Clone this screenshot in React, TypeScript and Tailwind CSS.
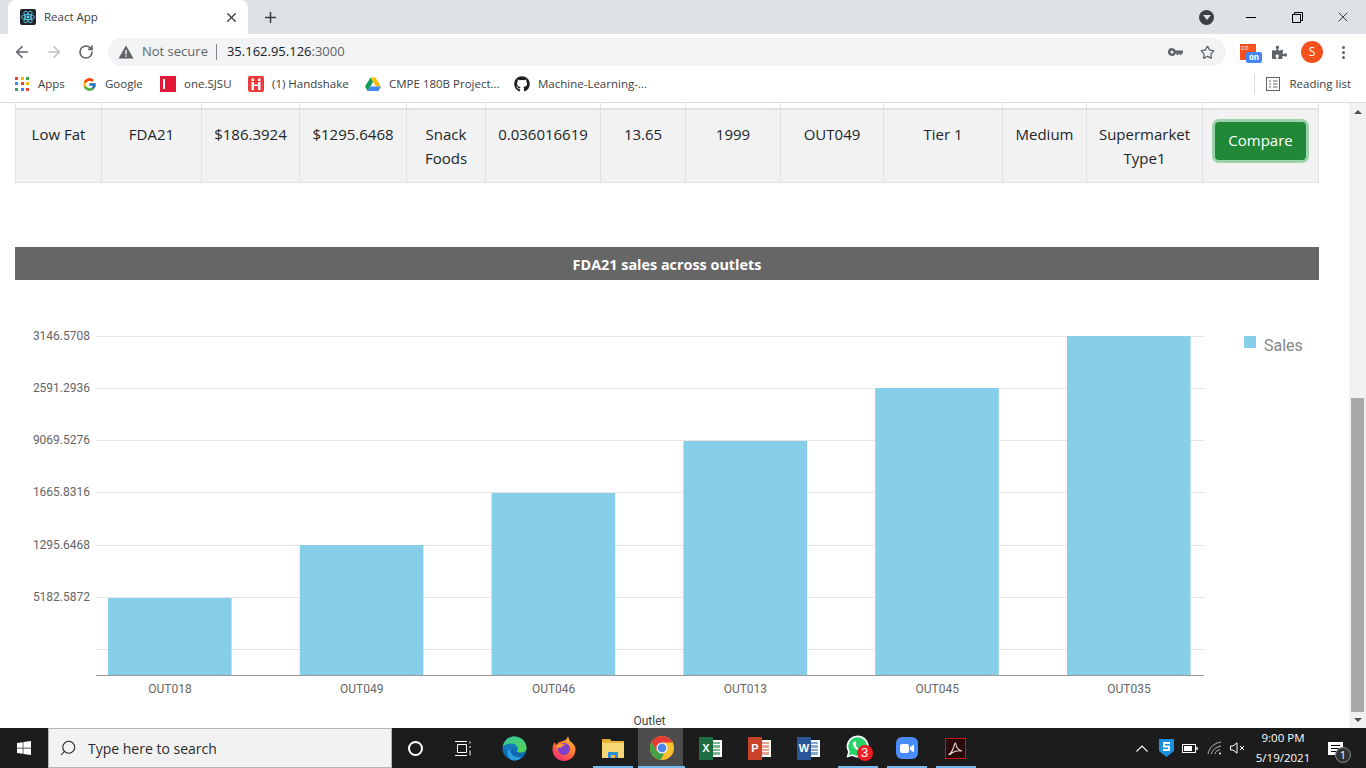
import { ArrowLeft, ArrowRight, RotateCw, Star, X, Plus, Search } from "lucide-react"
import { FaGithub, FaPuzzlePiece, FaWindows } from "react-icons/fa"
import { FcGoogle } from "react-icons/fc"

const columns = [
    { width: "w-[86px]", text: "Low Fat" },
    { width: "w-[100px]", text: "FDA21" },
    { width: "w-[98px]", text: "$186.3924" },
    { width: "w-[107px]", text: "$1295.6468" },
    { width: "w-[79px]", text: "Snack Foods" },
    { width: "w-[115px]", text: "0.036016619" },
    { width: "w-[85px]", text: "13.65" },
    { width: "w-[95px]", text: "1999" },
    { width: "w-[103px]", text: "OUT049" },
    { width: "w-[119px]", text: "Tier 1" },
    { width: "w-[84px]", text: "Medium" },
    { width: "w-[116px]", text: "Supermarket Type1" },
]

const gridLines = [336, 388, 440, 492, 545, 597, 649]
const yLabels = [
    { y: 336, text: "3146.5708" },
    { y: 388, text: "2591.2936" },
    { y: 440, text: "9069.5276" },
    { y: 492, text: "1665.8316" },
    { y: 545, text: "1295.6468" },
    { y: 597, text: "5182.5872" },
]
const bars = [
    { x: 108, top: 598, label: "OUT018" },
    { x: 299.8, top: 545, label: "OUT049" },
    { x: 491.6, top: 493, label: "OUT046" },
    { x: 683.4, top: 441, label: "OUT013" },
    { x: 875.2, top: 388, label: "OUT045" },
    { x: 1067, top: 336, label: "OUT035" },
]

function ReactFavicon() {
    return (
        <svg width="16" height="16" viewBox="0 0 16 16">
            <rect width="16" height="16" rx="2" fill="#20232a" />
            <g fill="none" stroke="#61dafb" strokeWidth="0.8">
                <ellipse cx="8" cy="8" rx="6.5" ry="2.6" />
                <ellipse cx="8" cy="8" rx="6.5" ry="2.6" transform="rotate(60 8 8)" />
                <ellipse cx="8" cy="8" rx="6.5" ry="2.6" transform="rotate(120 8 8)" />
            </g>
            <circle cx="8" cy="8" r="1.4" fill="#61dafb" />
        </svg>
    )
}

function AppsGrid() {
    const colors = ["#ea4335", "#fbbc04", "#34a853", "#4285f4", "#ea4335", "#fbbc04", "#34a853", "#4285f4", "#ea4335"]
    return (
        <div className="grid grid-cols-3 gap-[2px] w-[15px] h-[14px]">
            {colors.map((c, i) => (
                <span key={i} className="w-[3px] h-[3px]" style={{ backgroundColor: c }} />
            ))}
        </div>
    )
}

function DriveIcon() {
    return (
        <svg width="16" height="15" viewBox="0 0 16 15">
            <path d="M5.5 0.5h5L16 9.5h-5z" fill="#fbbc04" />
            <path d="M5.5 0.5L0 9.5l2.6 4.6L8 5z" fill="#0f9d58" />
            <path d="M2.6 14.1h10.8L16 9.5H5.2z" fill="#4285f4" />
        </svg>
    )
}

function HandshakeIcon() {
    return (
        <svg width="16" height="16" viewBox="0 0 16 16">
            <rect width="16" height="16" rx="2" fill="#ee3a3a" />
            <g fill="#fff">
                <rect x="3.500" y="2.500" width="2.500" height="2.500" />
                <rect x="10" y="2.500" width="2.500" height="2.500" />
                <rect x="3.500" y="6" width="2.500" height="8" />
                <rect x="10" y="6" width="2.500" height="8" />
                <rect x="6" y="8.500" width="4" height="1.500" />
            </g>
        </svg>
    )
}

function Bookmark({ icon, label, className }: { icon: React.ReactNode; label: string; className: string }) {
    return (
        <div className={`flex items-center ${className}`}>
            {icon}
            <span className="ml-2 whitespace-nowrap">{label}</span>
        </div>
    )
}

function ChromeLogo({ size = 24 }: { size?: number }) {
    return (
        <svg width={size} height={size} viewBox="0 0 24 24">
            <circle cx="12" cy="12" r="12" fill="#fbc02d" />
            <path d="M12 0a12 12 0 0 0-10.4 6l5.2 9L12 6.5h10.4A12 12 0 0 0 12 0z" fill="#e53935" />
            <path d="M1.6 6A12 12 0 0 0 10.5 23.9L15.7 15H6.8z" fill="#43a047" />
            <circle cx="12" cy="12" r="5.5" fill="#fff" />
            <circle cx="12" cy="12" r="4.4" fill="#4a86e8" />
        </svg>
    )
}

function EdgeLogo() {
    return (
        <svg width="25" height="25" viewBox="0 0 25 25">
            <defs>
                <linearGradient id="edgeA" x1="0" y1="0" x2="1" y2="1">
                    <stop offset="0" stopColor="#33c6a0" />
                    <stop offset="1" stopColor="#58d54e" />
                </linearGradient>
                <linearGradient id="edgeB" x1="0" y1="0" x2="0" y2="1">
                    <stop offset="0" stopColor="#1a8fd0" />
                    <stop offset="1" stopColor="#0c5aa6" />
                </linearGradient>
            </defs>
            <circle cx="12.5" cy="12.5" r="12" fill="url(#edgeB)" />
            <path d="M0.8 11C2 4 7 0.5 12.5 0.5 19 0.5 24.5 5.5 24.5 12c0 3-2.5 4.5-5.5 4.5-2.5 0-4.5-.6-4-1.6 1-1 1-2.5.2-4C14 8.500 11.500 7.500 9 7.500 5 7.500 2 9 .8 11z" fill="url(#edgeA)" />
            <path d="M8 13c0 5 4 8 8 8 1.500 0 3-.4 4-1-2 3-5 4.500-8 4.500-4 0-6.500-4-6.500-7.500 0-1.500 1-3.500 2.500-4z" fill="#2ba0e0" />
        </svg>
    )
}

function FirefoxLogo() {
    return (
        <svg width="24" height="25" viewBox="0 0 24 25">
            <defs>
                <linearGradient id="ffA" x1="0.8" y1="0" x2="0.2" y2="1">
                    <stop offset="0" stopColor="#ffbd2e" />
                    <stop offset="0.55" stopColor="#ff6a3a" />
                    <stop offset="1" stopColor="#f0267a" />
                </linearGradient>
            </defs>
            <path d="M16 0c1 2 .500 3.500 2 5 3 2.500 5.500 4.500 5.500 8.500C23.500 20 18.500 25 12 25S.5 20 .5 13.500C.5 10 1.500 7.500 3 6c0 1.500.5 2.500 1.500 3C6 6 9 5.500 11 5c2-.6 4.500-2 5-5z" fill="url(#ffA)" />
            <circle cx="12" cy="13" r="6" fill="#7b3fc8" />
            <path d="M3 10c3-2 7-3 11-1-3 0-4 1-4 2.500-3 0-4.500 1-7-1.500z" fill="#ff9b2e" />
        </svg>
    )
}

function FolderIcon() {
    return (
        <svg width="22" height="20" viewBox="0 0 22 20">
            <path d="M0 1h8l2 2.500H0z" fill="#e0a82e" />
            <rect y="3" width="22" height="17" fill="#f7d774" />
            <rect y="3" width="22" height="2" fill="#e8b93c" />
            <path d="M6 20v-6h10v6h-3v-3H9v3z" fill="#2e8fd6" />
            <rect x="9" y="17" width="4" height="3" fill="#f5b93a" />
        </svg>
    )
}

function OfficeIcon({ letter, dark, light }: { letter: string; dark: string; light: string }) {
    return (
        <div className="relative w-[23px] h-[23px]">
            <div className="absolute right-0 top-[3px] w-[14px] h-[17px] grid grid-rows-4 gap-[1px] p-[2px] bg-white">
                <span style={{ backgroundColor: light }} />
                <span style={{ backgroundColor: light }} />
                <span style={{ backgroundColor: light }} />
                <span style={{ backgroundColor: light }} />
            </div>
            <div
                className="absolute left-0 top-0 w-[14px] h-[23px] flex items-center justify-center text-white font-bold text-[11px] [font-family:'Liberation_Sans',sans-serif]"
                style={{ backgroundColor: dark }}
            >
                {letter}
            </div>
        </div>
    )
}

function WhatsappIcon() {
    return (
        <div className="relative w-[26px] h-[26px] ml-[2px]">
            <svg width="23" height="23" viewBox="0 0 23 23">
                <path d="M11.500 0.500a11 11 0 0 0-9.400 16.500L.5 22.500l5.700-1.500A11 11 0 1 0 11.500.5z" fill="#fff" />
                <path d="M11.500 2.300a9.200 9.200 0 0 0-7.700 14.100l-1 3.800 3.900-1A9.200 9.200 0 1 0 11.500 2.300z" fill="#25d366" />
                <path d="M8 6.500c-1 .6-1.500 2-1 3.500 1 2.600 3.500 5.200 6 6 1.500.5 3 0 3.500-1.200l.2-1.300-2.500-1.200-1.100 1.200c-1.500-.6-2.800-2-3.500-3.300l.9-1.200-1-2.500z" fill="#fff" />
            </svg>
            <span className="absolute right-[-1px] bottom-0 w-[16px] h-[16px] rounded-full bg-[#ee1c25] text-white text-[13px] leading-[16px] text-center [font-family:'Liberation_Sans',sans-serif]">
                3
            </span>
        </div>
    )
}

function ZoomIcon() {
    return (
        <div className="w-[22px] h-[22px] rounded-[6px] bg-[#4a8cff] flex items-center justify-center">
            <svg width="14" height="9" viewBox="0 0 14 9">
                <rect width="9" height="9" rx="2" fill="#fff" />
                <path d="M10 3.200L14 .5v8L10 5.800z" fill="#fff" />
            </svg>
        </div>
    )
}

function AcrobatIcon() {
    return (
        <div className="w-[21px] h-[21px] border-[1.5px] border-[#c8141a] bg-[#2a0b0b] flex items-center justify-center">
            <svg width="15" height="15" viewBox="0 0 15 15" fill="none" stroke="#e8d8d8" strokeWidth="1.1">
                <path d="M1 13.500c2-1 4-5 5.500-10 .3-2 1.500-2 1.500 0 0 3 3 6 6 6.500-3-.5-7 0-9.500 1.500C3 12.500 2 14 1 13.500z" />
            </svg>
        </div>
    )
}

function TaskbarCell({ children, underline, active }: { children: React.ReactNode; underline?: boolean; active?: boolean }) {
    return (
        <div className="relative w-[49px] h-full flex items-center justify-center">
            {active && <span className="absolute left-[1px] right-[3px] inset-y-0 bg-[#4c4c4c]" />}
            <div className="relative flex items-center justify-center">{children}</div>
            {underline && <span className={`absolute bottom-0 h-[2px] bg-[#76b9ed] ${active ? "left-[1px] right-[1px]" : "left-[5px] right-[4px]"}`} />}
        </div>
    )
}

export default function App() {
    return (
        <div className="w-[1366px] h-screen overflow-hidden flex flex-col bg-white [font-family:'Open_Sans',sans-serif]">
            {/* Tab strip */}
            <div className="h-[34px] shrink-0 bg-[#dee1e6] flex items-end">
                <div className="ml-[8px] w-[240px] h-[34px] bg-white rounded-t-[8px] flex items-center pl-[12px] pr-[9px]">
                    <ReactFavicon />
                    <span className="ml-[8px] text-[11.5px] text-[#3c4043]">React App</span>
                    <X className="ml-auto text-[#3c4043]" size={15} strokeWidth={2.2} />
                </div>
                <div className="w-[44px] h-[34px] flex items-center justify-center">
                    <Plus className="text-[#3c4043]" size={17} strokeWidth={2.2} />
                </div>
                <div className="ml-auto h-[34px] flex items-center">
                    <div className="w-[15px] h-[15px] rounded-full bg-[#3c4043] flex items-center justify-center mr-[14px]">
                        <span className="w-0 h-0 border-l-[4px] border-r-[4px] border-t-[5px] border-l-transparent border-r-transparent border-t-[#dee1e6]" />
                    </div>
                    <div className="w-[46px] flex justify-center">
                        <span className="w-[10px] h-[1px] bg-black" />
                    </div>
                    <div className="w-[46px] flex justify-center">
                        <svg width="11" height="11" viewBox="0 0 11 11" fill="none" stroke="#000">
                            <rect x="0.5" y="2.5" width="8" height="8" />
                            <path d="M2.500 2.500V.5h8v8H8.500" />
                        </svg>
                    </div>
                    <div className="w-[46px] flex justify-center">
                        <X className="text-black" size={16} strokeWidth={1.1} />
                    </div>
                </div>
            </div>

            {/* Toolbar */}
            <div className="h-[34px] shrink-0 bg-white flex items-center pt-[2px]">
                <div className="w-[108px] flex items-center pl-[13px]">
                    <ArrowLeft className="text-[#5f6368]" size={18} strokeWidth={2.2} />
                    <ArrowRight className="ml-[14px] text-[#bdc1c6]" size={18} strokeWidth={2.2} />
                    <RotateCw className="ml-[15px] text-[#5f6368]" size={16} strokeWidth={2.4} />
                </div>
                <div className="w-[1118px] h-[28px] rounded-full bg-[#f1f3f4] flex items-center pl-[10px] pr-[11px] text-[13px]">
                    <svg width="16" height="14" viewBox="0 0 16 14">
                        <path d="M8 0.500L15.500 13.500H.5z" fill="#5f6368" />
                        <rect x="7.300" y="5" width="1.400" height="4.500" fill="#f1f3f4" />
                        <rect x="7.300" y="10.300" width="1.400" height="1.500" fill="#f1f3f4" />
                    </svg>
                    <span className="ml-[8px] text-[#5f6368]">Not secure</span>
                    <span className="ml-[8px] w-[1px] h-[16px] bg-[#80868b]" />
                    <span className="ml-[10px] text-[#202124]">
                        35.162.95.126<span className="text-[#5f6368]">:3000</span>
                    </span>
                    <svg className="ml-auto" width="15" height="8" viewBox="0 0 15 8" fill="#5f6368">
                        <path d="M4 0a4 4 0 0 1 3.700 2.500H15v3h-1.500V7h-2V5.500h-1V7h-2V5.500h-.800A4 4 0 1 1 4 0zm0 2.500a1.500 1.500 0 1 0 0 3 1.500 1.500 0 0 0 0-3z" fillRule="evenodd" />
                    </svg>
                    <Star className="ml-[17px] text-[#5f6368]" size={15} strokeWidth={2} />
                </div>
                <div className="relative ml-[14px] w-[16px] h-[16px] bg-[#f4511e] text-[7px] text-white leading-[8px] pl-[1px]">
                    co
                    <span className="absolute left-[6px] top-[8px] w-[16px] h-[11px] rounded-[2px] bg-[#4285f4] text-white font-bold text-[8px] leading-[10px] text-center">
                        on
                    </span>
                </div>
                <FaPuzzlePiece className="ml-[16px] text-[#5f6368]" size={15} />
                <div className="ml-[14px] w-[22px] h-[22px] rounded-full bg-[#f4511e] text-white text-[12px] flex items-center justify-center">S</div>
                <div className="ml-[19px] flex flex-col gap-[2px]">
                    <span className="w-[3px] h-[3px] rounded-full bg-[#5f6368]" />
                    <span className="w-[3px] h-[3px] rounded-full bg-[#5f6368]" />
                    <span className="w-[3px] h-[3px] rounded-full bg-[#5f6368]" />
                </div>
            </div>

            {/* Bookmarks bar */}
            <div className="h-[35px] shrink-0 bg-white border-b border-[#dadce0] flex items-center text-[11.5px] text-[#3c4043] pl-[15px] pb-[2px]">
                <Bookmark className="w-[67px]" icon={<AppsGrid />} label="Apps" />
                <Bookmark className="w-[78px]" icon={<FcGoogle size={15} />} label="Google" />
                <Bookmark
                    className="w-[88px]"
                    icon={
                        <div className="w-[16px] h-[16px] bg-[#e31837] flex items-center pl-[3px]">
                            <span className="w-[2px] h-[10px] bg-white" />
                        </div>
                    }
                    label="one.SJSU"
                />
                <Bookmark className="w-[117px]" icon={<HandshakeIcon />} label="(1) Handshake" />
                <Bookmark className="w-[149px]" icon={<DriveIcon />} label="CMPE 180B Project..." />
                <Bookmark icon={<FaGithub className="text-[#1b1f23]" size={16} />} className="" label="Machine-Learning-..." />
                <span className="ml-auto w-[1px] h-[20px] bg-[#dadce0]" />
                <svg className="ml-[11px]" width="14" height="14" viewBox="0 0 14 14" fill="none" stroke="#5f6368">
                    <rect x="0.5" y="0.5" width="13" height="13" />
                    <path d="M3 4h2M7 4h4.500M3 7h2M7 7h4.500M3 10h2M7 10h4.500" />
                </svg>
                <span className="ml-[9px] mr-[15px]">Reading list</span>
            </div>

            {/* Page */}
            <div className="flex-1 min-h-0 flex">
                <div className="w-[1349px] min-h-0">
                    <div className="pl-[15px]">
                        <table className="w-[1303px] table-fixed border-collapse text-[15px] leading-[24px] text-[#212529]">
                            <tbody>
                                <tr className="h-[6px]">
                                    {columns.map((c, i) => (
                                        <td key={i} className={`${c.width} border-x border-[#dee2e6] p-0`} />
                                    ))}
                                    <td className="w-[116px] border-x border-[#dee2e6] p-0" />
                                </tr>
                                <tr className="bg-[#f2f2f2] h-[73px]">
                                    {columns.map((c, i) => (
                                        <td key={i} className="border border-t-2 border-[#dee2e6] pt-[12px] pb-[11px] px-[4px] text-center align-top">
                                            {c.text}
                                        </td>
                                    ))}
                                    <td className="border border-t-2 border-[#dee2e6] text-center align-top pt-[12px]">
                                        <button className="w-[91px] h-[38px] pb-[2px] rounded-[4px] bg-[#218838] text-white text-[15px] ring-[3px] ring-[#48b461]/50">
                                            Compare
                                        </button>
                                    </td>
                                </tr>
                            </tbody>
                        </table>
                        <div className="mt-[64px] w-[1304px] h-[33px] pt-[3px] bg-[#666666] text-white font-bold text-[14.4px] flex items-center justify-center">
                            FDA21 sales across outlets
                        </div>
                    </div>

                    <svg className="block" width="1349" height="448" viewBox="0 280 1349 448">
                        <g fontFamily="Roboto, sans-serif" fontSize="12" fill="#666666">
                            {gridLines.map((y) => (
                                <line key={y} x1="96" x2="1204" y1={y + 0.5} y2={y + 0.5} stroke="#e5e5e5" />
                            ))}
                            {yLabels.map((l) => (
                                <text key={l.y} x="90" y={l.y + 4} textAnchor="end">
                                    {l.text}
                                </text>
                            ))}
                            {bars.map((b) => (
                                <g key={b.x}>
                                    <rect x={b.x} y={b.top} width="123.6" height={675 - b.top} fill="#87ceeb" />
                                    <text x={b.x + 62} y="693" textAnchor="middle">
                                        {b.label}
                                    </text>
                                </g>
                            ))}
                            <line x1="96" x2="1204" y1="675.5" y2="675.5" stroke="#999999" />
                            <text x="649.5" y="725" textAnchor="middle" fill="#444444">
                                Outlet
                            </text>
                            <rect x="1244" y="336" width="12" height="12" rx="1" fill="#87ceeb" />
                            <text x="1264" y="351" fontSize="16" fill="#888888">
                                Sales
                            </text>
                        </g>
                    </svg>
                </div>

                {/* Scrollbar */}
                <div className="w-[17px] bg-[#f1f1f1] flex flex-col items-center">
                    <div className="h-[17px] shrink-0 flex items-center justify-center">
                        <span className="w-0 h-0 border-l-[4px] border-r-[4px] border-b-[4px] border-l-transparent border-r-transparent border-b-[#505050]" />
                    </div>
                    <div className="mt-[278px] w-[13px] h-[314px] shrink-0 bg-[#a8a8a8]" />
                    <div className="h-[16px] shrink-0 flex items-center justify-center">
                        <span className="w-0 h-0 border-l-[4px] border-r-[4px] border-t-[4px] border-l-transparent border-r-transparent border-t-[#505050]" />
                    </div>
                </div>
            </div>

            {/* Windows taskbar */}
            <div className="h-[40px] shrink-0 bg-[#1c1c1c] flex items-center text-white">
                <div className="w-[48px] flex justify-center">
                    <FaWindows size={16} />
                </div>
                <div className="w-[344px] h-full bg-[#f2f2f2] border border-[#b4b4b4] flex items-center pl-[10px] text-[14px] text-[#2b2b2b]">
                    <Search className="-scale-x-100 text-[#222]" size={18} strokeWidth={1.4} />
                    <span className="ml-[11px]">Type here to search</span>
                </div>
                <div className="flex h-full">
                    <TaskbarCell>
                        <span className="mr-[2px] w-[15px] h-[15px] rounded-full border-2 border-white" />
                    </TaskbarCell>
                    <TaskbarCell>
                        <svg className="mr-[4px]" width="17" height="15" viewBox="0 0 17 15" fill="none" stroke="#fff">
                            <path d="M0 .5h12M2.500 3.500h9v8h-9zM0 14.500h12M15 .5v2M15 5v2M15 9.500v5" />
                        </svg>
                    </TaskbarCell>
                    <TaskbarCell><EdgeLogo /></TaskbarCell>
                    <TaskbarCell><FirefoxLogo /></TaskbarCell>
                    <TaskbarCell underline><FolderIcon /></TaskbarCell>
                    <TaskbarCell underline active><ChromeLogo /></TaskbarCell>
                    <TaskbarCell><OfficeIcon letter="X" dark="#1d6f42" light="#7fb899" /></TaskbarCell>
                    <TaskbarCell><OfficeIcon letter="P" dark="#c9432a" light="#e6a493" /></TaskbarCell>
                    <TaskbarCell><OfficeIcon letter="W" dark="#2b579a" light="#8aa8d6" /></TaskbarCell>
                    <TaskbarCell underline><WhatsappIcon /></TaskbarCell>
                    <TaskbarCell underline><ZoomIcon /></TaskbarCell>
                    <TaskbarCell underline><AcrobatIcon /></TaskbarCell>
                </div>
                <div className="ml-auto h-full flex items-center">
                    <svg width="12" height="7" viewBox="0 0 12 7" fill="none" stroke="#fff" strokeWidth="1.1">
                        <path d="M.5 6.500L6 1l5.500 5.500" />
                    </svg>
                    <svg className="ml-[11px]" width="15" height="18" viewBox="0 0 15 18">
                        <path d="M0 0h15v12l-7.500 6L0 12z" fill="#1b8fe0" />
                        <path d="M11 4H5v3.500h5V11H4" fill="none" stroke="#fff" strokeWidth="1.800" />
                    </svg>
                    <svg className="ml-[8px]" width="16" height="9" viewBox="0 0 16 9" fill="none" stroke="#fff">
                        <rect x="0.5" y="0.5" width="13" height="8" />
                        <rect x="2" y="2" width="8" height="5" fill="#fff" stroke="none" />
                        <path d="M15 3v3" strokeWidth="1.500" />
                    </svg>
                    <svg className="ml-[9px]" width="16" height="14" viewBox="0 0 16 14" fill="none" stroke="#bbb">
                        <path d="M1 13C2 7 7 2 14 1M4.500 13C5 9.500 8.500 6 14 5M8 13c.3-2 2-4 5-4.300" />
                        <circle cx="13" cy="12.500" r="1" fill="#fff" stroke="none" />
                    </svg>
                    <svg className="ml-[7px]" width="15" height="12" viewBox="0 0 15 12" fill="none" stroke="#fff">
                        <path d="M.5 4h2.500L7 .8v10.400L3 8H.5zM10 4l4 4M14 4l-4 4" />
                    </svg>
                    <div className="ml-[1px] w-[74px] text-center text-[11.5px] leading-[20px] text-white">
                        <div>9:00 PM</div>
                        <div>5/19/2021</div>
                    </div>
                    <div className="relative ml-[8px] mr-[23px] w-[15px] h-[13px] bg-white">
                        <span className="absolute left-[3px] top-[3px] w-[9px] h-[1px] bg-black" />
                        <span className="absolute left-[3px] top-[6px] w-[9px] h-[1px] bg-black" />
                        <span className="absolute left-[3px] top-[9px] w-[6px] h-[1px] bg-black" />
                        <span className="absolute left-[7px] top-[5px] w-[16px] h-[16px] rounded-full bg-[#333] border border-[#888] text-[11px] leading-[14px] text-center text-white">
                            1
                        </span>
                    </div>
                </div>
            </div>
        </div>
    )
}
